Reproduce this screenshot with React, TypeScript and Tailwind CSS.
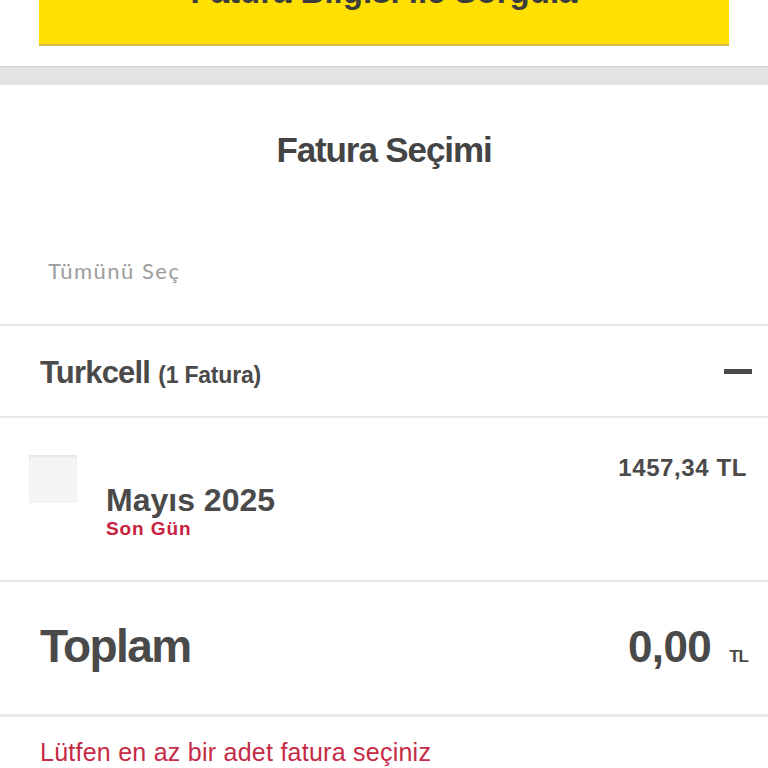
import React from "react";

export default function App() {
  return (
    <div className="w-[768px] h-[768px] overflow-hidden bg-white font-['Liberation_Sans',Arial,sans-serif] text-[#4a4a4a]">
      <div className="px-[39px]">
        <div className="h-[46px] bg-[#ffe000] border-b-2 border-[#d8b651] flex justify-center overflow-hidden">
          <span className="text-[33px] font-bold leading-[36px] -mt-[26px] text-[#3c3c3c] whitespace-nowrap">
            Fatura Bilgisi ile Sorgula
          </span>
        </div>
      </div>
      <div className="mt-[20px] h-[19px] bg-[#e3e3e3] border-t border-[#cfcfcf]" />
      <div className="pt-[45px] text-center text-[35px] font-bold leading-[40px] tracking-[-1.1px] text-[#444]">
        Fatura Seçimi
      </div>
      <div className="pt-[88px] pb-[40px] px-[48px] font-['Lato',sans-serif] text-[22px] leading-[26px] text-[#9d9d9d] tracking-[1.5px]">
        Tümünü Seç
      </div>
      <div className="h-[2px] bg-[#e8e8e8]" />
      <div className="h-[90px] flex items-center justify-between pl-[40px] pr-[16px] pt-[4px]">
        <div className="font-bold whitespace-nowrap">
          <span className="text-[31px] tracking-[-0.8px]">Turkcell</span>
          <span className="text-[23px] ml-[8px] tracking-[-0.2px]">(1 Fatura)</span>
        </div>
        <div className="w-[28px] h-[5px] bg-[#4a4a4a] -mt-[4px]" />
      </div>
      <div className="h-[2px] bg-[#e8e8e8]" />
      <div className="h-[162px] flex items-start">
        <div className="mt-[37px] ml-[29px] w-[48px] h-[48px] bg-[#f4f4f4] shadow-[inset_0_2px_2px_rgba(0,0,0,0.06)] shrink-0" />
        <div className="flex-1 ml-[29px] pt-[36px] pr-[21px] flex flex-col">
          <div className="self-end text-[24px] leading-[28px] font-bold tracking-[0.6px]">1457,34 TL</div>
          <div className="text-[32px] leading-[36px] font-bold">Mayıs 2025</div>
          <div className="text-[19px] leading-[22px] font-bold text-[#c8203f] tracking-[0.9px]">Son Gün</div>
        </div>
      </div>
      <div className="h-[2px] bg-[#e8e8e8]" />
      <div className="h-[132px] flex items-baseline justify-between pl-[40px] pr-[20px] pt-[38px]">
        <div className="text-[46px] leading-[52px] font-bold tracking-[-1.6px]">Toplam</div>
        <div className="flex items-baseline font-bold">
          <span className="text-[44px] leading-[52px] tracking-[-0.6px]">0,00</span>
          <span className="text-[17px] ml-[18px] tracking-[-1px]">TL</span>
        </div>
      </div>
      <div className="h-[3px] bg-[#e8e8e8]" />
      <div className="pt-[21px] pl-[40px] text-[25px] leading-[28px] text-[#c62a46] tracking-[0.25px] whitespace-nowrap">
        Lütfen en az bir adet fatura seçiniz
      </div>
    </div>
  );
}
